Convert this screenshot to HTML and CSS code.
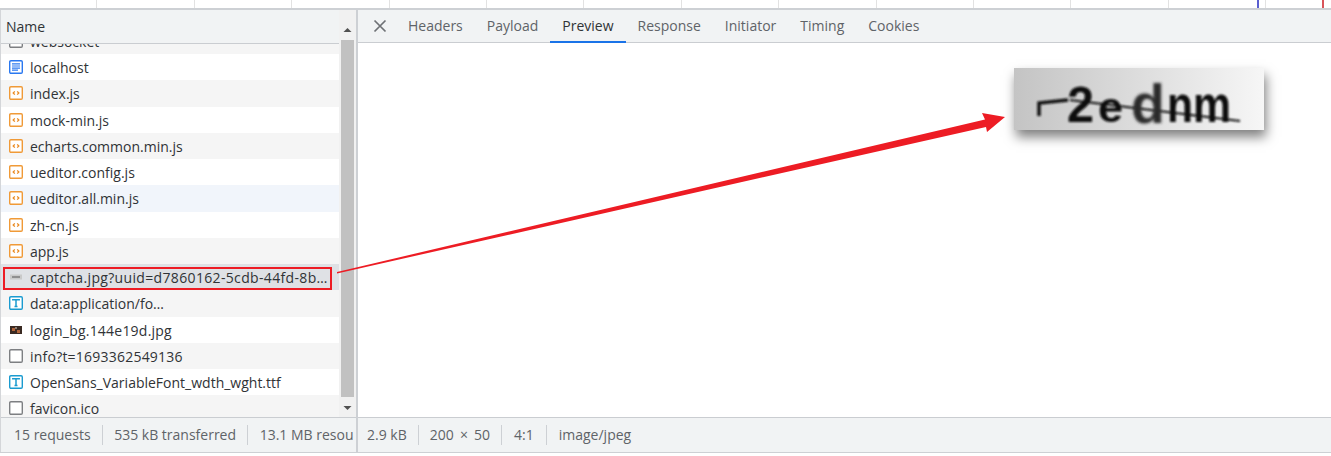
FILE: index.html
```html
<!DOCTYPE html>
<html lang="en">
<head>
<meta charset="utf-8">
<title>Network</title>
<link rel="stylesheet" href="styles.css">
</head>
<body>
<svg class="defs" width="0" height="0" aria-hidden="true">
  <symbol id="i-doc" viewBox="0 0 14 14"><rect x=".7" y=".7" width="12.600" height="12.600" rx="1.200" fill="#fff" stroke="#2a78f0" stroke-width="1.400"/><path d="M3 3.900h8M3 6h8M3 8.100h8M3 10.200h6" stroke="#2a78f0" stroke-width="1.200"/></symbol>
  <symbol id="i-js" viewBox="0 0 14 14"><rect x=".7" y=".7" width="12.600" height="12.600" rx="1.200" fill="#fff" stroke="#f09a37" stroke-width="1.400"/><path d="M5.800 5.400 4.200 7l1.600 1.600M8.200 5.400 9.800 7 8.200 8.600" fill="none" stroke="#ea8a20" stroke-width="1.300"/></symbol>
  <symbol id="i-font" viewBox="0 0 14 14"><rect x=".7" y=".7" width="12.600" height="12.600" rx="1.200" fill="#fff" stroke="#1a9bd0" stroke-width="1.400"/><path d="M3.800 4.600V3.700h6.400v.9M7 3.700v6.800M5.500 10.500h3" fill="none" stroke="#1a9bd0" stroke-width="1.500"/></symbol>
  <symbol id="i-blank" viewBox="0 0 14 14"><rect x=".7" y=".7" width="12.600" height="12.600" rx="1.200" fill="#fff" stroke="#7d7f82" stroke-width="1.400"/></symbol>
  <symbol id="i-cap" viewBox="0 0 14 14"><rect x="1" y="4.500" width="12" height="5" fill="#c9c9c9"/><path d="M3 7h8" stroke="#6a6a6a" stroke-width="1.200"/></symbol>
  <symbol id="i-bg" viewBox="0 0 14 14"><rect x="1" y="3" width="12" height="8" fill="#3a2a22"/><path d="M3 5h3v3H3zM8 7h3v3H8z" fill="#b0643a"/><path d="M6 4h2v2H6z" fill="#8a8078"/></symbol>
</svg>

<div class="timeline">
  <span class="marker marker-blue"></span>
  <span class="marker marker-red"></span>
</div>

<main class="panels">
  <section class="requests">
    <div class="list-area">
      <div class="list-main">
        <div class="name-head">Name</div>
        <div class="rows">
          <div class="row row-first alt"><svg class="ico"><use href="#i-blank"/></svg><span>websocket</span></div>
          <div class="row"><svg class="ico"><use href="#i-doc"/></svg><span>localhost</span></div>
          <div class="row alt"><svg class="ico"><use href="#i-js"/></svg><span>index.js</span></div>
          <div class="row"><svg class="ico"><use href="#i-js"/></svg><span>mock-min.js</span></div>
          <div class="row alt"><svg class="ico"><use href="#i-js"/></svg><span>echarts.common.min.js</span></div>
          <div class="row"><svg class="ico"><use href="#i-js"/></svg><span>ueditor.config.js</span></div>
          <div class="row hover"><svg class="ico"><use href="#i-js"/></svg><span>ueditor.all.min.js</span></div>
          <div class="row"><svg class="ico"><use href="#i-js"/></svg><span>zh-cn.js</span></div>
          <div class="row alt"><svg class="ico"><use href="#i-js"/></svg><span>app.js</span></div>
          <div class="row selected"><svg class="ico"><use href="#i-cap"/></svg><span class="wide">captcha.jpg?uuid=d7860162-5cdb-44fd-8b…</span></div>
          <div class="row alt"><svg class="ico"><use href="#i-font"/></svg><span>data:application/fo…</span></div>
          <div class="row"><svg class="ico"><use href="#i-bg"/></svg><span class="roomy">login_bg.144e19d.jpg</span></div>
          <div class="row alt"><svg class="ico"><use href="#i-blank"/></svg><span class="roomy">info?t=1693362549136</span></div>
          <div class="row"><svg class="ico"><use href="#i-font"/></svg><span>OpenSans_VariableFont_wdth_wght.ttf</span></div>
          <div class="row alt"><svg class="ico"><use href="#i-blank"/></svg><span>favicon.ico</span></div>
        </div>
      </div>
      <div class="scrollbar">
        <svg class="arrow-btn" viewBox="0 0 17 30"><path d="M4.500 22 8.500 18 12.500 22z" fill="#505050"/></svg>
        <div class="thumb"></div>
        <svg class="arrow-btn-down" viewBox="0 0 17 20"><path d="M4.500 9 8.500 13 12.500 9z" fill="#505050"/></svg>
      </div>
    </div>
    <footer class="status status-left">
      <span class="stat">15 requests</span>
      <span class="stat">535 kB transferred</span>
      <span class="stat">13.1 MB resou</span>
    </footer>
  </section>

  <section class="detail">
    <nav class="tabs">
      <svg class="close" viewBox="0 0 14 14"><path d="M1.500 1.500 12.500 12.500M12.500 1.500 1.500 12.500" stroke="#6e7175" stroke-width="1.700" fill="none"/></svg>
      <span class="tab">Headers</span>
      <span class="tab">Payload</span>
      <span class="tab active">Preview</span>
      <span class="tab">Response</span>
      <span class="tab">Initiator</span>
      <span class="tab">Timing</span>
      <span class="tab">Cookies</span>
    </nav>
    <div class="preview">
      <div class="captcha">
        <svg class="captcha-art" viewBox="0 0 250 62">
          <defs>
            <filter id="soft" x="-10%" y="-10%" width="120%" height="120%"><feGaussianBlur stdDeviation="0.8"/></filter>
            <filter id="ghost" x="-20%" y="-20%" width="140%" height="140%"><feGaussianBlur stdDeviation="1.500"/></filter>
          </defs>
          <g filter="url(#soft)">
            <text class="cap cap-two" x="53" y="54" textLength="27" lengthAdjust="spacingAndGlyphs">2</text>
            <text class="cap cap-e" x="84" y="54" textLength="25" lengthAdjust="spacingAndGlyphs">e</text>
            <text class="cap cap-tall" x="153" y="54" textLength="26" lengthAdjust="spacingAndGlyphs">n</text>
            <text class="cap cap-tall" x="179" y="54" textLength="38" lengthAdjust="spacingAndGlyphs">m</text>
            <path d="M25 48V35L54 32" fill="none" stroke="#111" stroke-width="3.500"/>
            <path d="M56 32 226 53" fill="none" stroke="#111" stroke-width="2"/>
          </g>
          <g filter="url(#ghost)">
            <text class="cap cap-d" x="117" y="55" textLength="34" lengthAdjust="spacingAndGlyphs">d</text>
          </g>
        </svg>
      </div>
    </div>
    <footer class="status status-right">
      <span class="stat stat-tight">2.9 kB</span>
      <span class="stat stat-tight stat-dims">200 × 50</span>
      <span class="stat">4:1</span>
      <span class="stat">image/jpeg</span>
    </footer>
  </section>
</main>

<div class="annotation">
  <span class="red-box"></span>
  <svg class="red-arrow" viewBox="0 0 1331 456"><polygon points="337,272 985,119.500 982,113 1005,117 987,132 986,127 337,273.500" fill="#ed1c24"/></svg>
</div>
</body>
</html>
```

FILE: styles.css
```css
* { box-sizing: border-box; }
html, body { margin: 0; height: 456px; overflow: hidden; }
body {
  position: relative;
  background: #fff;
  font-family: "Open Sans", "Noto Sans", sans-serif;
  font-size: 14px;
  color: #303336;
  display: flex;
  flex-direction: column;
}
.defs { position: absolute; }

.timeline {
  position: relative;
  height: 10px;
  flex: none;
  border-bottom: 2px solid #cdd0d4;
  background: repeating-linear-gradient(90deg, #fff 0, #fff 96.400px, #e2e2e2 96.400px, #e2e2e2 97.400px);
}
.marker { position: absolute; top: 0; bottom: 0; width: 2px; }
.marker-blue { left: 1257px; background: #5a5fd0; }
.marker-red { left: 1322px; background: #d9545a; }

.panels { display: flex; height: 443px; flex: none; border-bottom: 1px solid #cdd0d4; }

.requests {
  width: 358px;
  flex: none;
  display: flex;
  flex-direction: column;
  border-left: 1px solid #d4d6d9;
  border-right: 2px solid #cdd0d4;
}
.list-area { flex: 1; min-height: 0; display: flex; }
.list-main { width: 338px; flex: none; display: flex; flex-direction: column; min-height: 0; }
.name-head {
  height: 34px;
  flex: none;
  display: flex;
  align-items: center;
  padding-left: 5px;
  background: #f1f3f4;
  border-bottom: 1px solid #cacdd1;
}
.rows { flex: 1; min-height: 0; overflow: hidden; }
.row {
  height: 26.250px;
  display: flex;
  align-items: center;
  gap: 7px;
  padding-left: 8px;
  white-space: nowrap;
}
.row span { padding-top: 1px; }
.row .wide { letter-spacing: .34px; }
.row .roomy { letter-spacing: .22px; }
.row-first { margin-top: -16.250px; }
.alt { background: #f5f5f5; }
.hover { background: #f1f5fb; }
.selected { background: #dfe1e5; }
.ico { width: 14px; height: 14px; flex: none; }

.scrollbar {
  width: 17px;
  flex: none;
  background: #f1f1f1;
  display: flex;
  flex-direction: column;
}
.arrow-btn { width: 17px; height: 30px; flex: none; }
.thumb { width: 13px; margin: 0 2px; height: 357px; flex: none; background: #c1c1c1; }
.arrow-btn-down { width: 17px; height: 20px; flex: none; }

.status {
  height: 35px;
  flex: none;
  display: flex;
  align-items: center;
  background: #f1f3f4;
  border-top: 1px solid #cacdd1;
  color: #5f6368;
  white-space: nowrap;
  overflow: hidden;
}
.stat { padding: 0 12px; line-height: 20px; border-right: 1px solid #cdd0d4; flex: none; }
.stat:last-child { border-right: 0; }
.status-left { padding-left: 1.700px; }
.status-left .stat { padding: 0 11.300px; }
.status-right .stat:first-child { padding-left: 9px; }
.status-right .stat-tight { padding-right: 11px; }
.status-right .stat-dims { padding-left: 11px; word-spacing: 2.500px; }

.detail { flex: 1; min-width: 0; display: flex; flex-direction: column; }
.tabs {
  height: 33px;
  flex: none;
  display: flex;
  align-items: stretch;
  background: #f1f3f4;
  border-bottom: 1px solid #cacdd1;
}
.close { width: 14px; height: 14px; flex: none; align-self: center; margin: 0 9px 0 15px; }
.tab {
  display: flex;
  align-items: center;
  padding: 0 12px;
  color: #5f6368;
  border-bottom: 2px solid transparent;
  margin-bottom: -1px;
}
.tab.active { color: #303336; border-bottom-color: #1a73e8; }

.preview { flex: 1; min-height: 0; display: flex; justify-content: flex-end; align-items: flex-start; padding: 25px 67px 0 0; }
.captcha {
  width: 250px;
  height: 62px;
  background: linear-gradient(90deg, #c4c4c4, #f6f6f6);
  box-shadow: 2px 7px 11px rgba(0,0,0,.5);
}
.captcha-art { display: block; width: 250px; height: 62px; }
.cap { font-family: "Liberation Sans", sans-serif; font-weight: 700; fill: #0e0e0e; }
.cap-two { font-size: 50px; }
.cap-e { font-size: 42px; }
.cap-tall { font-size: 52px; }
.cap-d { font-size: 55px; fill: #2a2a2a; }

.annotation { position: absolute; inset: 0; pointer-events: none; }
.red-box { position: absolute; left: 3px; top: 267px; width: 329px; height: 23px; border: 2px solid #ed1c24; }
.red-arrow { position: absolute; left: 0; top: 0; width: 1331px; height: 456px; }
```
